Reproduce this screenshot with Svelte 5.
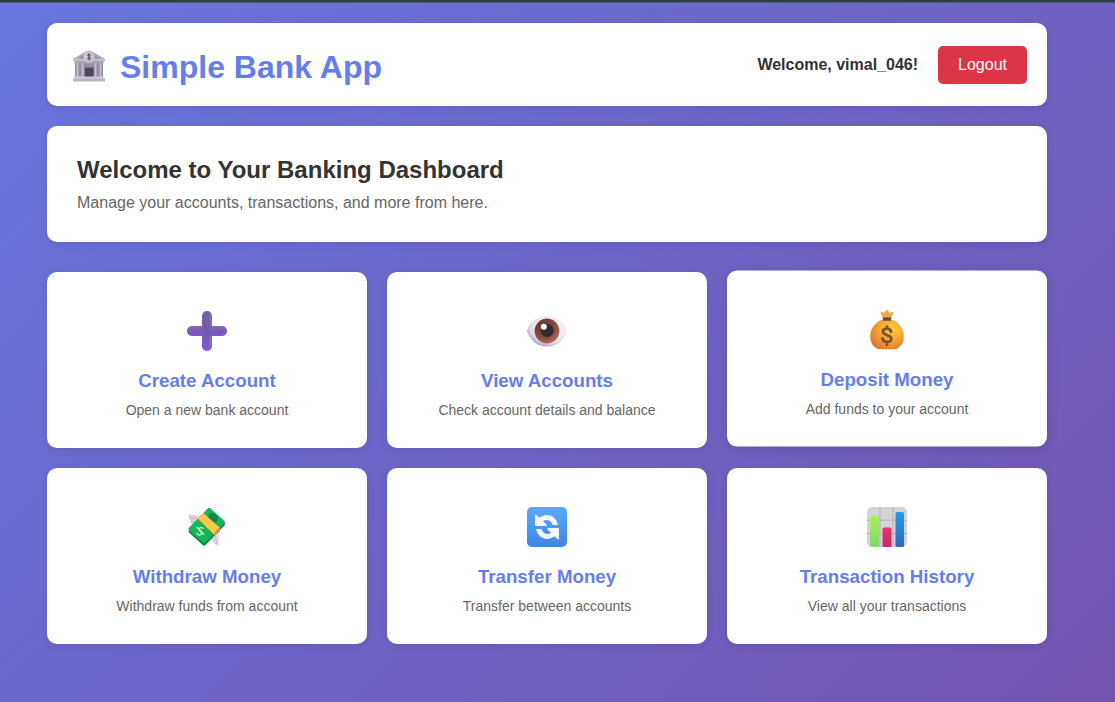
<script>
  const actions = [
    { icon: 'plus', title: 'Create Account', text: 'Open a new bank account' },
    { icon: 'eye', title: 'View Accounts', text: 'Check account details and balance' },
    { icon: 'bag', title: 'Deposit Money', text: 'Add funds to your account', raised: true },
    { icon: 'cash', title: 'Withdraw Money', text: 'Withdraw funds from account' },
    { icon: 'swap', title: 'Transfer Money', text: 'Transfer between accounts' },
    { icon: 'chart', title: 'Transaction History', text: 'View all your transactions' }
  ];
</script>

<div class="page">
  <main>
    <header class="panel">
      <h1>
        <svg class="bank" viewBox="0 0 34 34" aria-hidden="true">
          <defs>
            <linearGradient id="col" x1="0" x2="1"><stop offset="0" stop-color="#9c92a8" /><stop offset=".5" stop-color="#c9c3d0" /><stop offset="1" stop-color="#8b8296" /></linearGradient>
          </defs>
          <rect x="3" y="13" width="28" height="16" fill="#988fa3" />
          <path d="M1.5 9.8 14 2.6Q17 .8 20 2.6L32.5 9.8V12H1.5Z" fill="#aaa2b3" />
          <path d="M6 10 17 3.5 28 10Z" fill="#877c92" />
          <rect x="1" y="9.5" width="32" height="2.6" rx=".6" fill="#c5bfcc" />
          <rect x="2.5" y="12" width="29" height="2.5" fill="#aaa2b3" />
          <rect x="13" y="18.5" width="8.5" height="9.5" fill="#4d4658" />
          <rect x="4" y="14" width="3.4" height="14" fill="url(#col)" />
          <rect x="9" y="14" width="3.4" height="14" fill="url(#col)" />
          <rect x="22" y="14" width="3.4" height="14" fill="url(#col)" />
          <rect x="27" y="14" width="3.4" height="14" fill="url(#col)" />
          <rect x="2.3" y="27.5" width="29.4" height="2.5" fill="#d0cad6" />
          <rect x="1" y="29.4" width="32" height="3" rx=".5" fill="#b9b2c2" />
          <circle cx="17" cy="8" r="6.2" fill="#bcb4c6" />
          <circle cx="17" cy="7.7" r="5" fill="#cbc4d3" />
          <path d="M18.6 6.2Q17 4.8 15.8 6c-.8 1.5 2.7 1.6 2.4 3.2-.4 1.2-2 1-2.9.1M17 4.2v7.2" fill="none" stroke="#665078" stroke-width="1.2" />
        </svg>
        <span>Simple Bank App</span>
      </h1>
      <div class="user">
        <strong>Welcome, vimal_046!</strong>
        <button>Logout</button>
      </div>
    </header>

    <section class="panel intro">
      <h2>Welcome to Your Banking Dashboard</h2>
      <p>Manage your accounts, transactions, and more from here.</p>
    </section>

    <section class="grid">
      {#each actions as action}
        <article class="card" class:raised={action.raised}>
          <svg class="icon" viewBox="0 0 40 40" aria-hidden="true">
            {#if action.icon === 'plus'}
              <defs>
                <linearGradient id="pv" x1="0" x2="0" y1="0" y2="1"><stop offset="0" stop-color="#7565a0" /><stop offset=".5" stop-color="#7558aa" /><stop offset="1" stop-color="#8458d5" /></linearGradient>
                <linearGradient id="ph" x1="0" x2="0" y1="0" y2="1"><stop offset="0" stop-color="#8171a8" /><stop offset=".55" stop-color="#7659b4" /><stop offset="1" stop-color="#8152e2" /></linearGradient>
              </defs>
              <rect x="15" y="0" width="10" height="40" rx="4.8" fill="url(#pv)" />
              <rect x="0" y="15" width="40" height="10" rx="4.8" fill="url(#ph)" />
              <path d="M16.5 15h7v10h-7z" fill="#7359ac" />
              <path d="M23.6 4v11M23.6 26v10" fill="none" stroke="#9a83c5" stroke-width="1.4" stroke-linecap="round" opacity=".65" />
            {:else if action.icon === 'eye'}
              <defs>
                <radialGradient id="sclera" cx=".62" cy=".35" r=".68"><stop offset=".55" stop-color="#f1eff3" /><stop offset=".82" stop-color="#dcd6e5" /><stop offset="1" stop-color="#a996c5" /></radialGradient>
                <radialGradient id="iris" cx=".35" cy=".3" r=".8"><stop offset="0" stop-color="#603432" /><stop offset=".55" stop-color="#86483f" /><stop offset="1" stop-color="#b5735c" /></radialGradient>
              </defs>
              <path d="M.5 18.5C4 9.5 11 5 20 5S36 9.5 39.5 18.5q.8 1.6 0 3C35.5 30.5 29 35.5 20 35.5S4.500 30.500 .5 21.500q-.8-1.500 0-3Z" fill="url(#sclera)" />
              <circle cx="20" cy="20" r="12.400" fill="url(#iris)" />
              <circle cx="20.200" cy="19.500" r="6.500" fill="#302a30" />
              <circle cx="16.800" cy="15.800" r="3" fill="#fff" />
            {:else if action.icon === 'bag'}
              <defs>
                <radialGradient id="sack" cx=".65" cy=".3" r=".78"><stop offset="0" stop-color="#ffcc42" /><stop offset=".5" stop-color="#f5a52e" /><stop offset="1" stop-color="#d97636" /></radialGradient>
              </defs>
              <path d="M15.500 8 13.800 3.500q-.3-1.500 1.200-1.200l2.200 1L19 .8q1-1.200 2 0l1.800 2.500 2.200-1q1.500-.3 1.200 1.200L24.500 8Z" fill="#f1a93a" />
              <path d="M14 10.500h12c6.500 3.200 10.800 9.500 10.800 16.200 0 8.500-5.200 13.300-11.300 13.300h-11C8.400 40 3.200 35.200 3.200 26.700c0-6.700 4.300-13 10.800-16.200Z" fill="url(#sack)" />
              <rect x="15.800" y="7.700" width="8.400" height="3.500" rx=".8" fill="#704738" />
              <path d="M24 22q-.6-3-4-3c-3 0-4.300 1.500-4 3.400.5 3.600 8.200 2.700 8.300 6.600.1 2.200-1.800 3.400-4.300 3.400-2.700 0-4.200-1.400-4.500-3.600M20 17v2M20 32.400V35" fill="none" stroke="#825039" stroke-width="2.900" stroke-linecap="round" />
            {:else if action.icon === 'cash'}
              <defs><linearGradient id="wing" x1="0" x2="1"><stop offset="0" stop-color="#d2ced5" /><stop offset="1" stop-color="#e9e6ea" /></linearGradient></defs>
              <path d="M1.500 7.500 17 9l-3 8-7 3-1-3-2.500-.5.2-3L2.200 12Z" fill="url(#wing)" />
              <path d="M2.700 11 13 12.500M4 14.300 11 15.800" stroke="#aaa5ac" stroke-width=".6" />
              <path d="m24 28 7.500-4q2 7 .5 15-3 .5-4-2-2 0-2-3-2 0-2-6Z" fill="url(#wing)" />
              <path d="M28.600 29.500 29.500 37" stroke="#aaa5ac" stroke-width=".6" />
              <path d="M2.200 22.500 20.700 3Q22 1.700 23.500 3L37 15.500q1.700 1.500.4 3L18.500 38q-1.300 1.300-2.800 0L2.300 25.700q-1.500-1.500-.1-3.200Z" fill="#07893e" />
              <path d="M2.200 20.500 20.700 1.500Q22 .2 23.500 1.500L37 13.500q1.700 1.500.4 3L18.500 35.500q-1.300 1.300-2.800 0L2.300 23.600q-1.500-1.500-.1-3.100Z" fill="#1bb358" />
              <ellipse cx="26.200" cy="10.800" rx="5.200" ry="4.300" transform="rotate(45 26.200 10.800)" fill="#128541" />
              <path d="m10.800 11.700 5.500-5.700L32.500 20.500v4l-4.300 4Z" fill="#ffc94c" />
              <path d="M32.500 20.500v4l-4.500 4v-3.600Z" fill="#df852d" />
              <path d="M16 21.400q-2-1.700-3.500-.2c-1.400 1.500.3 2.700 1.400 3.600 1.300 1.100.3 3-.9 3.100-1.400.2-2.400-.5-3-1.500M10.200 20.400l6.800 7.200" fill="none" stroke="#b8f1c6" stroke-width="1.400" stroke-linecap="round" />
            {:else if action.icon === 'swap'}
              <defs><linearGradient id="blue" x1="0" x2="0" y1="0" y2="1"><stop offset="0" stop-color="#5ba9f9" /><stop offset=".6" stop-color="#4696f0" /><stop offset="1" stop-color="#4285df" /></linearGradient></defs>
              <rect width="40" height="40" rx="5" fill="url(#blue)" />
              <path d="m9.600 8 3 2.700C19 5.700 28.500 7.800 31 18h-5.200c-2-5-6.500-6.200-9.800-3.700l3.700 3.500q.5 1.200-.8 1.200H9.200Q8 19 8 17.800V8.600q0-1.600 1.600-.6Z" fill="#f5f9ff" />
              <path d="m30.400 32-3-2.700C21 34.300 11.500 32.200 9 22h5.200c2 5 6.500 6.200 9.800 3.700l-3.700-3.500q-.5-1.200.8-1.200h9.700q1.200 0 1.200 1.200v9.200q0 1.600-1.600.6Z" fill="#f5f9ff" />
            {:else}
              <defs>
                <linearGradient id="green" x1="0" x2="0" y1="0" y2="1"><stop offset="0" stop-color="#a7f05a" /><stop offset="1" stop-color="#82d76f" /></linearGradient>
                <linearGradient id="azure" x1="0" x2="0" y1="0" y2="1"><stop offset="0" stop-color="#249ce7" /><stop offset="1" stop-color="#286abd" /></linearGradient>
                <linearGradient id="pink" x1="0" x2="0" y1="0" y2="1"><stop offset="0" stop-color="#e8336b" /><stop offset="1" stop-color="#bb2e75" /></linearGradient>
              </defs>
              <rect width="40" height="40" rx="5" fill="#d6d2da" />
              <path d="M13 0v40M26 0v40M0 13.200h40M0 26.500h40" stroke="#b3adb9" stroke-width="1" />
              <rect x="3" y="8.700" width="9" height="31.300" rx="1.500" fill="url(#green)" />
              <rect x="15.500" y="20.500" width="9" height="19.500" rx="1.500" fill="url(#pink)" />
              <rect x="28.500" y="5" width="8.500" height="35" rx="1.500" fill="url(#azure)" />
            {/if}
          </svg>
          <h3>{action.title}</h3>
          <p>{action.text}</p>
        </article>
      {/each}
    </section>
  </main>
</div>

<style>
  :global(body) { margin: 0; }
  * { box-sizing: border-box; }
  .page {
    width: 100%;
    height: 702px;
    overflow: hidden;
    border-top: 2px solid #2e4038;
    box-shadow: inset 0 1px #4c5c7c;
    padding: 21px 0 0 47px;
    background: linear-gradient(135deg, #6976de 0%, #7354b0 100%) border-box;
    font-family: Arial, "Liberation Sans", sans-serif;
    color: #333;
  }
  main { width: 1000px; }
  h1, h2, h3, p { margin: 0; }
  .panel, .card {
    background: #fff;
    border-radius: 10px;
    box-shadow: 0 2px 10px rgba(0, 0, 0, .1);
  }
  header {
    height: 83px;
    padding: 20px 20px 20px 25px;
    display: flex;
    align-items: center;
    justify-content: space-between;
    margin-bottom: 20px;
  }
  h1 {
    display: flex;
    align-items: center;
    gap: 14px;
    font-size: 32px;
    line-height: 37px;
    color: #667eea;
  }
  h1 span { padding-top: 5px; }
  .bank { width: 34px; height: 34px; display: block; margin-top: 3px; }
  .user { display: flex; align-items: center; gap: 20px; font-size: 16px; }
  button {
    border: 0;
    border-radius: 5px;
    background: #dc3545;
    color: #fff;
    font: 16px/18px Arial, "Liberation Sans", sans-serif;
    padding: 10px 20px;
  }
  .intro { height: 116px; padding: 30px; margin-bottom: 30px; }
  h2 { font-size: 24px; line-height: 28px; margin-bottom: 9px; }
  .intro p { font-size: 16px; line-height: 19px; color: #666; }
  .grid { display: grid; grid-template-columns: repeat(3, 1fr); gap: 20px; }
  .card {
    height: 176px;
    padding-top: 39px;
    display: flex;
    flex-direction: column;
    align-items: center;
    text-align: center;
  }
  .raised { transform: translateY(-1.4px); box-shadow: 0 3px 13px rgba(0, 0, 0, .13); }
  .icon { width: 40px; height: 40px; flex: none; }
  h3 { font-size: 18.72px; line-height: 22px; margin: 19px 0 10px; color: #667eea; }
  .card p { font-size: 14px; line-height: 17px; color: #666; }
</style>
